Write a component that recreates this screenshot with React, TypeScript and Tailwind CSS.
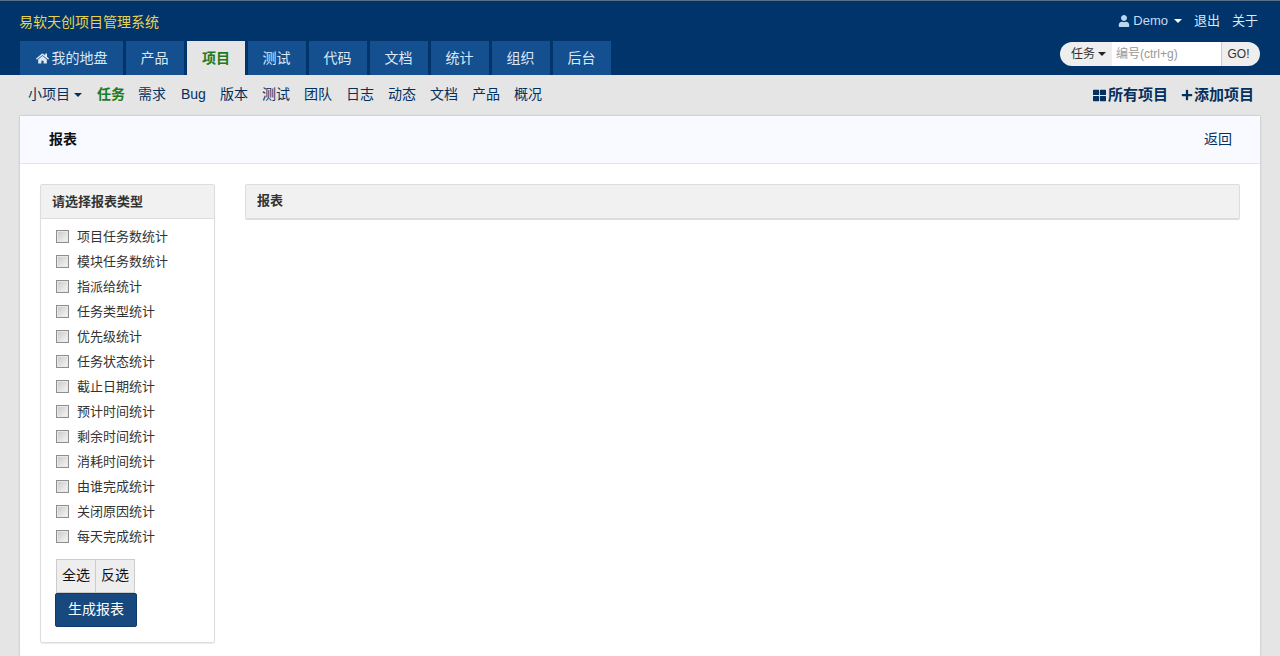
import React from "react";
import { FaHome, FaUser, FaThLarge, FaPlus } from "react-icons/fa";

const mainTabs = ["产品", "项目", "测试", "代码", "文档", "统计", "组织", "后台"];
const subNav = [
  { label: "需求", w: "mr-[15px]" },
  { label: "Bug", w: "mr-[14px]" },
  { label: "版本", w: "mr-[14px]" },
  { label: "测试", w: "mr-[14px]" },
  { label: "团队", w: "mr-[14px]" },
  { label: "日志", w: "mr-[14px]" },
  { label: "动态", w: "mr-[14px]" },
  { label: "文档", w: "mr-[14px]" },
  { label: "产品", w: "mr-[14px]" },
  { label: "概况", w: "" },
];
const reportTypes = [
  "项目任务数统计",
  "模块任务数统计",
  "指派给统计",
  "任务类型统计",
  "优先级统计",
  "任务状态统计",
  "截止日期统计",
  "预计时间统计",
  "剩余时间统计",
  "消耗时间统计",
  "由谁完成统计",
  "关闭原因统计",
  "每天完成统计",
];

function Caret({ color = "border-t-white" }: { color?: string }) {
  return <span className={`inline-block w-0 h-0 border-x-[4px] border-x-transparent border-t-[4px] ${color}`} />;
}

export default function App() {
  return (
    <div className="h-[656px] overflow-hidden bg-[#e5e5e5] font-['Liberation_Sans','Noto_Sans_CJK_SC',sans-serif] text-[14px] text-[#03305f]">
      <header className="h-[75px] bg-[#00346b] border-t border-[#5b6f86] px-5 flex flex-col">
        <div className="flex justify-between h-[40px]">
          <div className="pt-[11px] text-[14px] leading-[20px] text-[#e8d44d] -ml-[1px]">易软天创项目管理系统</div>
          <div className="flex items-center text-[13px] h-[40px] pr-[2px] pb-[1px]">
            <FaUser className="text-[12px] text-[#b9d7f0] mr-[3px]" />
            <span className="text-[#c5dcf2] mr-[6px]">Demo</span>
            <Caret />
            <span className="ml-[12px] text-[#dfe9f4]">退出</span>
            <span className="ml-[12px] text-[#dfe9f4]">关于</span>
          </div>
        </div>
        <div className="flex justify-between h-[34px]">
          <nav className="flex gap-[3px]">
            <div className="w-[103px] h-[34px] bg-[#14508f] text-[#dce8f5] flex items-center justify-center gap-[3px]">
              <FaHome className="text-[13px]" />
              我的地盘
            </div>
            {mainTabs.map((tab) => (
              <div
                key={tab}
                className={
                  tab === "项目"
                    ? "w-[58px] h-[34px] bg-[#e5e5e5] text-[#1e7a1e] font-bold flex items-center justify-center"
                    : "w-[58px] h-[34px] bg-[#14508f] text-[#dce8f5] flex items-center justify-center pr-[1px]"
                }
              >
                {tab}
              </div>
            ))}
          </nav>
          <div className="flex h-[24px] mt-[1px] text-[12px] text-[#333333]">
            <div className="w-[52px] bg-[#eeeeee] rounded-l-[12px] flex items-center justify-end pr-[6px] gap-[3px]">
              任务
              <Caret color="border-t-[#222222]" />
            </div>
            <input
              readOnly
              placeholder="编号(ctrl+g)"
              className="w-[109px] bg-white pl-[4px] pr-[5px] text-[12px] placeholder:text-[#999999] outline-none"
            />
            <div className="w-[39px] bg-[#eeeeee] border-l border-[#cccccc] rounded-r-[12px] flex items-center justify-center pr-[5px]">
              GO!
            </div>
          </div>
        </div>
      </header>

      <div className="h-[41px] px-5 flex items-center justify-between">
        <div className="flex items-center pl-[8px] pb-[2px]">
          <span className="mr-[4px]">小项目</span>
          <Caret color="border-t-[#03305f]" />
          <span className="ml-[15px] mr-[13px] font-bold text-[#1e7a1e]">任务</span>
          {subNav.map((item) => (
            <span key={item.label} className={item.w}>
              {item.label}
            </span>
          ))}
        </div>
        <div className="flex items-center text-[15px] font-bold text-[#03305f] pr-[6px] pb-[1px]">
          <FaThLarge className="text-[13px] mr-[2px]" />
          <span>所有项目</span>
          <FaPlus className="text-[12px] ml-[13px] mr-[1px]" />
          <span>添加项目</span>
        </div>
      </div>

      <div className="mx-5 bg-white shadow-[0_0_2px_rgba(0,0,0,0.25)] h-[540px]">
        <div className="h-[48px] bg-[#f8faff] border-b border-[#e5e5e5] flex items-center justify-between pl-[29px] pr-[28px]">
          <span className="font-bold text-[#111111]">报表</span>
          <span className="text-[#03305f]">返回</span>
        </div>
        <div className="flex px-5 pt-5 gap-[30px] items-start">
          <aside className="w-[175px] h-[459px] shrink-0 border border-[#dddddd] rounded-[2px] shadow-[0_1px_1px_rgba(0,0,0,0.08)]">
            <div className="h-[34px] bg-[#f1f1f1] border-b border-[#dddddd] flex items-center px-[11px] text-[13px] font-bold text-[#333333]">
              请选择报表类型
            </div>
            <div className="pl-[15px] pt-[6px]">
              {reportTypes.map((name) => (
                <label key={name} className="h-[25px] flex items-center text-[13px] text-[#333333]">
                  <input
                    type="checkbox"
                    readOnly
                    className="appearance-none w-[13px] h-[13px] mr-[8px] mb-[2px] border border-[#8e8e8e] bg-gradient-to-br from-[#c8c8c8] to-[#f8f8f8] shadow-[inset_0_0_0_1px_#e8e8e8]"
                  />
                  <span className="mb-[2px]">{name}</span>
                </label>
              ))}
              <div className="flex mt-[9px]">
                <div className="w-[40px] h-[34px] pb-[2px] bg-[#eeeeee] border border-[#cccccc] flex items-center justify-center text-[#111111]">
                  全选
                </div>
                <div className="w-[39px] h-[34px] pb-[2px] bg-[#eeeeee] border border-l-0 border-[#cccccc] flex items-center justify-center text-[#111111]">
                  反选
                </div>
              </div>
              <div className="w-[82px] h-[34px] pb-[2px] -ml-[1px] bg-[#17497f] border border-[#0d3a6b] rounded-[2px] flex items-center justify-center text-white">
                生成报表
              </div>
            </div>
          </aside>
          <section className="flex-1 h-[36px] pb-[1px] bg-[#f1f1f1] border border-[#dddddd] border-b-2 rounded-[2px] flex items-center px-[11px] text-[13px] font-bold text-[#333333]">
            报表
          </section>
        </div>
      </div>
    </div>
  );
}
